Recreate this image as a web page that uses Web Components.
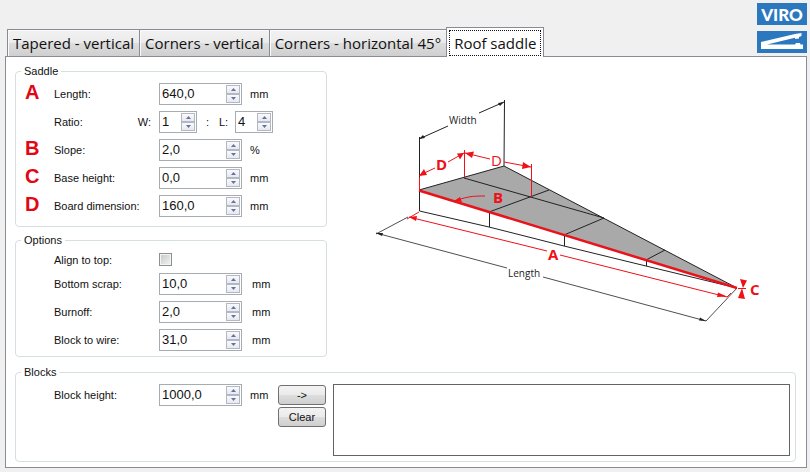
<!DOCTYPE html>
<html lang="en">
<head>
<meta charset="utf-8">
<title>VIRO - Roof saddle</title>
<style>
html, body { min-height: 100%; }
body { margin: 0; background: #f0f0f0; color: #111; font: 11px/14px "Liberation Sans", Arial, sans-serif; }
</style>
</head>
<body>
<viro-app></viro-app>
<script>
const spinStyle = `
  .spin { display: inline-flex; box-sizing: border-box; height: 22px; border: 1px solid #a5acb2; background: #fff; padding: 1px; }
  .spin input { flex: 1; min-width: 0; width: 0; border: 0; padding: 0 1px; margin: 0; outline: 0; background: none; color: #111; font: 13px/18px "Liberation Sans", Arial, sans-serif; }
  .arrows { display: grid; grid-template-rows: 1fr 1fr; width: 14px; }
  .arrows button { display: grid; place-items: center; border: 1px solid #b4b8c2; background: linear-gradient(#fafafc, #e6e9f2); padding: 0; margin: 0; min-height: 0; }
  .arrows svg { display: block; width: 5px; height: 3px; fill: #66719c; }
`;
const spin = (id, value, width, name) => `
  <span class="spin" style="width:${width}px">
    <input id="${id}" type="text" inputmode="decimal" value="${value}">
    <span class="arrows">
      <button type="button" tabindex="-1" aria-label="Increase ${name}"><svg viewBox="0 0 5 3"><path d="M0 3L2.500 0L5 3z"/></svg></button>
      <button type="button" tabindex="-1" aria-label="Decrease ${name}"><svg viewBox="0 0 5 3"><path d="M0 0L2.500 3L5 0z"/></svg></button>
    </span>
  </span>`;
const rowStyle = `
  :host { display: grid; grid-template-columns: 29px 105px auto 1fr; align-items: center; min-height: 22px; }
  .mark { font: bold 20px/18px "Liberation Sans", Arial, sans-serif; color: #e30613; align-self: start; }
  .unit { padding-left: var(--unit-gap, 8px); }
`;

class NumberField extends HTMLElement {
  connectedCallback() {
    const a = n => this.getAttribute(n) || '';
    this.attachShadow({ mode: 'open' }).innerHTML = `<style>${rowStyle}${spinStyle}</style>
      <span class="mark">${a('mark')}</span>
      <label for="value">${a('label')}:</label>
      ${spin('value', a('value'), 83, a('label'))}
      <span class="unit">${a('unit')}</span>`;
  }
}

class RatioField extends HTMLElement {
  connectedCallback() {
    this.attachShadow({ mode: 'open' }).innerHTML = `<style>${rowStyle}${spinStyle}
      .name { display: flex; justify-content: space-between; padding-right: 8px; }
      .rest { display: flex; align-items: center; }
      .colon { width: 22px; box-sizing: border-box; padding-left: 9px; }
      .rest label { width: 16px; }
      </style>
      <span></span>
      <span class="name"><span>Ratio:</span><label for="w">W:</label></span>
      ${spin('w', '1', 38, 'width ratio')}
      <span class="rest"><span class="colon">:</span><label for="l">L:</label>${spin('l', '4', 38, 'length ratio')}</span>`;
  }
}

class CheckField extends HTMLElement {
  connectedCallback() {
    this.attachShadow({ mode: 'open' }).innerHTML = `<style>${rowStyle}
      :host { min-height: 15px; }
      input { appearance: none; margin: 0; width: 13px; height: 13px; border: 1px solid #8e8f8f; background: linear-gradient(135deg, #c4c6c9, #f4f4f4); box-shadow: inset 0 0 0 1px #f4f4f4; }
      input:checked { background: #4b5f97; }
      </style>
      <span></span><label for="check">${this.getAttribute('label')}:</label><input id="check" type="checkbox">`;
  }
}

class GroupBox extends HTMLElement {
  connectedCallback() {
    this.attachShadow({ mode: 'open' }).innerHTML = `<style>
      :host { display: block; }
      fieldset { margin: 0; min-width: 0; box-sizing: border-box; border: 1px solid #d5dfdf; border-radius: 4px; padding: 5px 5px 9px 9px; }
      :host([tight]) fieldset { padding-bottom: 5px; }
      legend { margin-left: -4px; padding: 0 3px; }
      </style><fieldset><legend>${this.getAttribute('label')}</legend><slot></slot></fieldset>`;
  }
}

class TabStrip extends HTMLElement {
  connectedCallback() {
    const tabs = ['Tapered - vertical', 'Corners - vertical', 'Corners - horizontal 45°', 'Roof saddle'];
    this.attachShadow({ mode: 'open' }).innerHTML = `<style>
      :host { display: flex; align-items: flex-end; }
      button { box-sizing: border-box; height: 27px; margin: 0 0 0 -1px; padding: 0 5px; border: 1px solid #898c95; border-bottom: 0; box-shadow: inset 1px 1px #fafafa; background: linear-gradient(#f2f2f2, #ebebeb 48%, #dcdcdc 52%, #cfcfcf); color: #111; white-space: nowrap; font: 15px/26px "Open Sans", "Noto Sans", sans-serif; }
      button[aria-selected=true] { height: 30px; background: #fff; margin-bottom: -1px; padding: 2px; box-shadow: none; }
      button[aria-selected=true] span { display: block; border: 1px dotted #111; padding: 0 4px; height: 24px; line-height: 24px; }
      </style><div role="tablist" style="display:contents">${tabs.map((t, i) => `<button role="tab" type="button" aria-selected="${i === 3}"><span>${t}</span></button>`).join('')}</div>`;
  }
}

class ViroLogo extends HTMLElement {
  connectedCallback() {
    this.attachShadow({ mode: 'open' }).innerHTML = `<style>
      :host { display: grid; gap: 6px; width: 50px; }
      .name { height: 22px; background: #2b78be; color: #fff; text-align: center; font: 900 17px/24px Lato, sans-serif; }
      svg { display: block; width: 50px; height: 22px; background: #2b78be; }
      </style>
      <span class="name">VIRO</span>
      <svg viewBox="0 0 50 22" aria-hidden="true"><path fill="#fff" d="M4 11L38 3L44.500 2V5L42 6V7.500L38 8V6.800L10 13.500H38L39 12H43L43.500 13.500H46V18H4z"/></svg>`;
  }
}

class SaddleDiagram extends HTMLElement {
  connectedCallback() {
    this.attachShadow({ mode: 'open' }).innerHTML = `<style>
      :host { display: block; }
      svg { display: block; width: 100%; height: auto; }
      .k { stroke: #222; fill: none; } .r { stroke: #f01018; fill: none; }
      .rf { fill: #f01018; } .kf { fill: #222; }
      text { font-family: "Open Sans", "Noto Sans", sans-serif; font-size: 10px; fill: #222; }
      .b { font: bold 15px "Open Sans", sans-serif; fill: #f01018; }
      .d { font-weight: 400; }
      </style>
      <svg viewBox="327 70 469 287" role="img" aria-label="Roof saddle dimensions">
        <path fill="#a9a9a9" d="M419 190L504 166L737 288z"/>
        <path class="k" d="M419 190L504 166L737 288M464 178L604 218M489 212L549 190M564 235L604 218M646 260L665 250"/>
        <path class="k" d="M419.500 137V211L489 227L564 246L646 266L737 288M489.500 212V227M564.500 235V246M646.500 260V266M504.500 100L504 166"/>
        <path class="k" d="M419 139L448 126M479 113L504 102"/>
        <path class="kf" d="M419 139L423 135L425 138zM504 102L500 106L498 103z"/>
        <path class="k" stroke-width=".8" d="M376 234L408 217M376 233L507 268M543 277L706 321L737 288"/>
        <path class="kf" d="M376 233L383 233L382 236zM706 321L699 320.500L700 317.500z"/>
        <path class="r" d="M419.500 177V190M464.500 150V177M531.500 164V197M420 175L435 168M448 162L464 153M465 153L490 159M504 162L531 167"/>
        <path class="rf" d="M419 176L424 169L427 175zM464 153L460 159.500L457 153.500zM465 153L474 151.500L472 158zM531 167L522 169L523 162z"/>
        <path class="r" d="M407 219L419 212M409 217L547 251M560 255L727 297L731 293M485 196C477 196 468 196 458 200"/>
        <path class="rf" d="M409 217L417 216L416 221zM727 296.500L717 297L718 292.500zM454 201L460 197L462 202z"/>
        <path stroke="#e8131b" stroke-width="2.500" d="M419 190.500L737 288"/>
        <path class="rf" d="M740 279L747 280.500L743 288zM742 288L745 299L738 298z"/>
        <path class="r" d="M738 288.500H746"/>
        <text x="449" y="124">Width</text>
        <text x="508" y="277">Length</text>
        <text class="b" x="436" y="170">D</text>
        <text class="b d" x="491" y="166">D</text>
        <text class="b" x="493" y="203">B</text>
        <text class="b" x="548" y="260">A</text>
        <text class="b" x="750" y="295">C</text>
      </svg>`;
  }
}

class BlockOutput extends HTMLElement {
  connectedCallback() {
    this.attachShadow({ mode: 'open' }).innerHTML = `<style>
      :host { display: grid; grid-template-columns: 48px 1fr; gap: 7px; }
      .actions { display: grid; gap: 2px; align-content: start; padding-top: 1px; }
      button { box-sizing: border-box; height: 20px; border: 1px solid #707070; border-radius: 3px; padding: 0; margin: 0; background: linear-gradient(#f3f3f3, #ebebeb 48%, #dddddd 52%, #cfcfcf); color: #111; font: 11px/16px "Liberation Sans", Arial, sans-serif; }
      textarea { box-sizing: border-box; width: 100%; height: 72px; margin: 0; border: 1px solid #646464; background: #fff; resize: none; display: block; }
      </style>
      <div class="actions"><button type="button">-&gt;</button><button type="button">Clear</button></div>
      <textarea aria-label="Blocks" readonly></textarea>`;
  }
}

class ViroApp extends HTMLElement {
  connectedCallback() {
    this.attachShadow({ mode: 'open' }).innerHTML = `<style>
      :host { display: block; padding: 3px 3px 4px 5px; }
      header { display: flex; justify-content: space-between; align-items: flex-end; padding-left: 3px; }
      viro-logo { padding-bottom: 3px; }
      main { border: 1px solid #898c95; background: #fff; padding: 7px 10px 5px 9px; }
      .top { display: grid; grid-template-columns: 312px 1fr; }
      .groups { display: grid; gap: 6px; align-content: start; }
      .rows { display: grid; gap: 6px; }
      saddle-diagram { padding-top: 6px; }
      .options { --unit-gap: 10px; }
      .blocks { margin-top: 8px; }
      .line { display: grid; grid-template-columns: 253px 1fr; align-items: start; }
      </style>
      <header><tab-strip></tab-strip><viro-logo></viro-logo></header>
      <main>
        <div class="top">
          <div class="groups">
            <group-box label="Saddle"><div class="rows">
              <number-field mark="A" label="Length" value="640,0" unit="mm"></number-field>
              <ratio-field></ratio-field>
              <number-field mark="B" label="Slope" value="2,0" unit="%"></number-field>
              <number-field mark="C" label="Base height" value="0,0" unit="mm"></number-field>
              <number-field mark="D" label="Board dimension" value="160,0" unit="mm"></number-field>
            </div></group-box>
            <group-box label="Options" tight><div class="rows options">
              <check-field label="Align to top"></check-field>
              <number-field label="Bottom scrap" value="10,0" unit="mm"></number-field>
              <number-field label="Burnoff" value="2,0" unit="mm"></number-field>
              <number-field label="Block to wire" value="31,0" unit="mm"></number-field>
            </div></group-box>
          </div>
          <saddle-diagram></saddle-diagram>
        </div>
        <group-box class="blocks" label="Blocks" tight><div class="line">
          <number-field label="Block height" value="1000,0" unit="mm"></number-field>
          <block-output></block-output>
        </div></group-box>
      </main>`;
  }
}

customElements.define('number-field', NumberField);
customElements.define('ratio-field', RatioField);
customElements.define('check-field', CheckField);
customElements.define('group-box', GroupBox);
customElements.define('tab-strip', TabStrip);
customElements.define('viro-logo', ViroLogo);
customElements.define('saddle-diagram', SaddleDiagram);
customElements.define('block-output', BlockOutput);
customElements.define('viro-app', ViroApp);
</script>
</body>
</html>
